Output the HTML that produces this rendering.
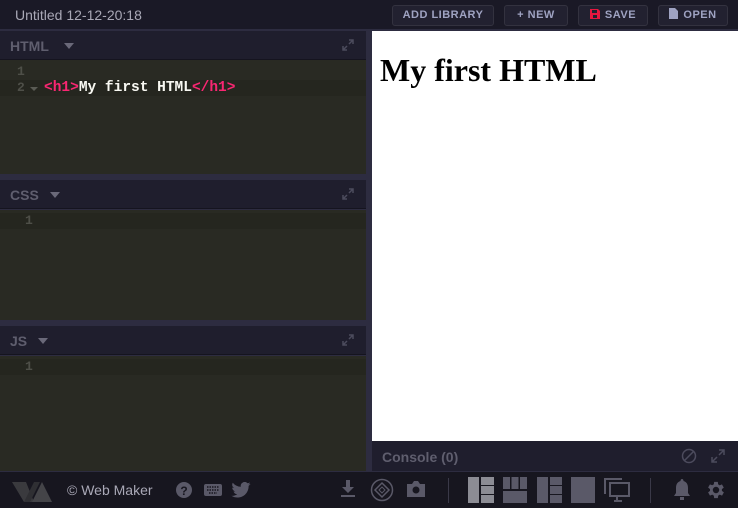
<!DOCTYPE html>
<html><head><meta charset="utf-8"><style>
*{margin:0;padding:0;box-sizing:border-box}
body{width:738px;height:508px;overflow:hidden;background:#2d2c40;font-family:"Liberation Sans",sans-serif;position:relative}
.abs{position:absolute}
.top{left:0;top:0;width:738px;height:30px;background:#1a1926;border-bottom:1px solid #2d2c40}
.title{left:15px;top:7px;color:#a9a8b6;font-size:14px}
.btn{top:5px;height:21px;background:#222130;border:1px solid #33323f;border-radius:3px;color:#9fa3c2;font-size:11px;font-weight:bold;letter-spacing:.5px;line-height:19px;text-align:center}
.hdr{left:0;width:366px;height:29px;background:#1f1e2d;border-bottom:1px solid #15141f}
.hdr span{position:absolute;left:10px;top:7px;color:#5f5e6e;font-weight:bold;font-size:14px}
.hdr i{position:absolute;top:12px;width:0;height:0;border-left:5px solid transparent;border-right:5px solid transparent;border-top:6px solid #6a6979}
.code{left:0;width:366px;background:#292a23}
.al{position:absolute;left:0;width:366px;height:16px;background:#25261f}
.ln{position:absolute;color:#4e4f48;font-family:"Liberation Mono",monospace;font-size:14.5px;font-weight:bold;line-height:16px}
.ex{position:absolute;right:12px;top:8px}
</style></head><body>
<div class="abs top"></div>
<div class="abs title">Untitled 12-12-20:18</div>
<div class="abs btn" style="left:392px;width:102px">ADD LIBRARY</div>
<div class="abs btn" style="left:504px;width:64px">+ NEW</div>
<div class="abs btn" style="left:578px;width:70px"><svg width="10" height="10" style="vertical-align:-1px;margin-right:5px"><path d="M0 0h8l2 2v8H0z" fill="#e8173f"/><rect x="2" y="1" width="5" height="3" fill="#222130"/><rect x="3" y="6" width="4" height="3" fill="#222130"/></svg>SAVE</div>
<div class="abs btn" style="left:658px;width:70px"><svg width="9" height="11" style="vertical-align:-1px;margin-right:5px"><path d="M0 0h6l3 3v8H0z" fill="#9fa3c2"/></svg>OPEN</div>

<div class="abs hdr" style="top:31px"><span>HTML</span><i style="left:64px"></i><svg class="ex" width="12" height="12"><path d="M7 1h4v4M11 1L7 5M1 7v4h4M1 11l4-4" stroke="#4c4b5d" fill="none" stroke-width="1.5"/></svg></div>
<div class="abs code" style="top:60px;height:114px">
<div class="al" style="top:20px"></div>
<div class="ln" style="left:17px;top:4px;font-size:13px">1</div>
<div class="ln" style="left:17px;top:20px;font-size:13px">2</div>
<div style="position:absolute;left:30px;top:27px;border-left:4px solid transparent;border-right:4px solid transparent;border-top:4px solid #5a5b54"></div>
<div class="ln" style="left:44px;top:20px;color:#f8f8f2"><span style="color:#f92672">&lt;h1&gt;</span>My first HTML<span style="color:#f92672">&lt;/h1&gt;</span></div>
</div>

<div class="abs hdr" style="top:180px"><span>CSS</span><i style="left:50px"></i><svg class="ex" width="12" height="12"><path d="M7 1h4v4M11 1L7 5M1 7v4h4M1 11l4-4" stroke="#4c4b5d" fill="none" stroke-width="1.5"/></svg></div>
<div class="abs code" style="top:210px;height:110px"><div class="al" style="top:3px;height:16px"></div><div class="ln" style="left:25px;top:3px;font-size:13px">1</div></div>

<div class="abs hdr" style="top:326px"><span>JS</span><i style="left:38px"></i><svg class="ex" width="12" height="12"><path d="M7 1h4v4M11 1L7 5M1 7v4h4M1 11l4-4" stroke="#4c4b5d" fill="none" stroke-width="1.5"/></svg></div>
<div class="abs code" style="top:356px;height:115px"><div class="al" style="top:3px;height:16px"></div><div class="ln" style="left:25px;top:3px;font-size:13px">1</div></div>

<div class="abs" style="left:372px;top:31px;width:366px;height:410px;background:#fff"><div style="font-family:'Liberation Serif',serif;font-weight:bold;font-size:32px;margin:21px 0 0 8px">My first HTML</div></div>
<div class="abs" style="left:372px;top:441px;width:366px;height:30px;background:#1f1e2d"><span style="position:absolute;left:10px;top:8px;color:#5f5e6e;font-weight:bold;font-size:14px">Console (0)</span>
<svg style="position:absolute;left:309px;top:7px" width="16" height="16"><circle cx="8" cy="8" r="6.5" stroke="#4c4b5d" stroke-width="1.5" fill="none"/><path d="M3 13L13 3" stroke="#4c4b5d" stroke-width="1.5"/></svg>
<svg style="position:absolute;left:339px;top:8px" width="14" height="14"><path d="M8 1h5v5M13 1L8 6M1 8v5h5M1 13l5-5" stroke="#4c4b5d" fill="none" stroke-width="1.5"/></svg></div>

<div class="abs" style="left:0;top:471px;width:738px;height:37px;background:#17161f;border-top:1px solid #2d2c40">
<svg style="position:absolute;left:12px;top:8px" width="46" height="22"><path d="M0 2h14l8 20h-10z" fill="#3a3a3e"/><path d="M20 22L30 2l10 20z" fill="#444448"/><path d="M12 22L22 2l6 0-10 20z" fill="#2f2f33"/></svg>
<span style="position:absolute;left:67px;top:10px;color:#a9a8b6;font-size:14px">© Web Maker</span>
<svg style="position:absolute;left:176px;top:10px" width="16" height="16"><circle cx="8" cy="8" r="8" fill="#5a5968"/><text x="8" y="13" font-size="12" font-weight="bold" text-anchor="middle" fill="#17161f" font-family="Liberation Sans">?</text></svg>
<svg style="position:absolute;left:204px;top:12px" width="18" height="12"><rect width="18" height="12" rx="2" fill="#5a5968"/><path d="M3 3h12M3 6h12M5 9h8" stroke="#17161f" stroke-width="1.5" stroke-dasharray="1.5 1"/></svg>
<svg style="position:absolute;left:231px;top:10px" width="20" height="16" viewBox="0 0 24 20"><path d="M24 2.4a10 10 0 01-2.8.8A5 5 0 0023.3.4a10 10 0 01-3.1 1.2A4.9 4.9 0 0011.8 6 14 14 0 011.7.9a4.9 4.9 0 001.5 6.6A4.9 4.9 0 011 6.9a4.9 4.9 0 003.9 4.8 5 5 0 01-2.2.1 4.9 4.9 0 004.6 3.4A9.900 9.9 0 010 17.2 14 14 0 007.5 19.4c9.1 0 14-7.5 14-14v-.6A10 10 0 0024 2.4z" fill="#5a5968"/></svg>
<svg style="position:absolute;left:340px;top:8px" width="16" height="18"><path d="M6 0h4v7h4l-6 6-6-6h4z" fill="#5a5968"/><rect x="1" y="15" width="14" height="2" fill="#5a5968"/></svg>
<svg style="position:absolute;left:370px;top:6px" width="24" height="24"><circle cx="12" cy="12" r="10.5" stroke="#5a5968" stroke-width="1.5" fill="none"/><path d="M12 5l7 7-7 7-7-7z" stroke="#5a5968" stroke-width="1.5" fill="none"/><path d="M12 9l3 3-3 3-3-3z" stroke="#5a5968" fill="none"/></svg>
<svg style="position:absolute;left:405px;top:8px" width="22" height="18"><path d="M2 4h5l2-3h4l2 3h5v13H2z" fill="#5a5968"/><circle cx="11" cy="10" r="3.5" fill="#17161f"/></svg>
<div style="position:absolute;left:448px;top:6px;width:1px;height:25px;background:#3a3948"></div>
<svg style="position:absolute;left:468px;top:5px" width="26" height="26"><rect x="0" y="0" width="11" height="26" fill="#8c8c94"/><rect x="13" y="0" width="13" height="8" fill="#8c8c94"/><rect x="13" y="9" width="13" height="8" fill="#8c8c94"/><rect x="13" y="18" width="13" height="8" fill="#8c8c94"/></svg>
<svg style="position:absolute;left:503px;top:5px" width="24" height="26"><rect x="0" y="0" width="7" height="12" fill="#5a5968"/><rect x="8.5" y="0" width="7" height="12" fill="#5a5968"/><rect x="17" y="0" width="7" height="12" fill="#5a5968"/><rect x="0" y="14" width="24" height="12" fill="#5a5968"/></svg>
<svg style="position:absolute;left:537px;top:5px" width="25" height="26"><rect x="0" y="0" width="11" height="26" fill="#5a5968"/><rect x="13" y="0" width="12" height="8" fill="#5a5968"/><rect x="13" y="9" width="12" height="8" fill="#5a5968"/><rect x="13" y="18" width="12" height="8" fill="#5a5968"/></svg>
<svg style="position:absolute;left:571px;top:5px" width="24" height="26"><rect width="24" height="26" fill="#5a5968"/></svg>
<svg style="position:absolute;left:604px;top:6px" width="26" height="24"><path d="M1 16V1h17" stroke="#5a5968" stroke-width="2" fill="none"/><rect x="6" y="5" width="19" height="13" stroke="#5a5968" stroke-width="2" fill="none"/><path d="M13 18v4M10 23h8" stroke="#5a5968" stroke-width="2"/></svg>
<div style="position:absolute;left:650px;top:6px;width:1px;height:25px;background:#3a3948"></div>
<svg style="position:absolute;left:673px;top:7px" width="18" height="22"><path d="M9 0c1 0 1.5 1 1.5 2C14 3 15 6 15 9v5l2 3H1l2-3V9c0-3 1-6 4.5-7C7.5 1 8 0 9 0z" fill="#5a5968"/><rect x="7" y="18" width="4" height="3" fill="#5a5968"/></svg>
<svg style="position:absolute;left:705px;top:7px" width="22" height="22" viewBox="0 0 24 24"><path d="M19.4 13a7.5 7.5 0 000-2l2.1-1.6-2-3.5-2.5 1a7.5 7.5 0 00-1.700-1L15 3.1h-4l-.4 2.7a7.5 7.5 0 00-1.7 1l-2.5-1-2 3.5L6.5 11a7.5 7.5 0 000 2l-2.1 1.6 2 3.5 2.5-1a7.5 7.5 0 001.7 1l.4 2.7h4l.4-2.7a7.5 7.5 0 001.7-1l2.5 1 2-3.5zM13 15.5a3.5 3.5 0 110-7 3.5 3.5 0 010 7z" fill="#5a5968" transform="translate(-1 0)"/></svg>
</div>
</body></html>
